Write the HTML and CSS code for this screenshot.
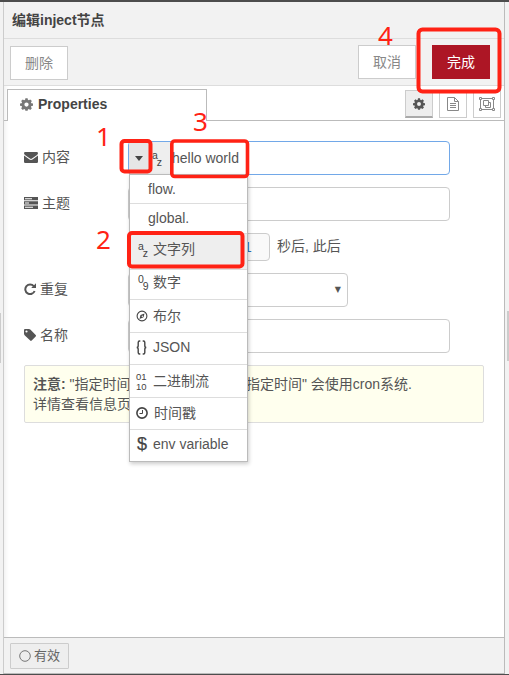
FILE: index.html
```html
<!DOCTYPE html>
<html lang="zh-CN">
<head>
<meta charset="utf-8">
<title>编辑inject节点</title>
<link rel="stylesheet" href="styles.css">
</head>
<body>
<svg class="defs" width="0" height="0">
  <symbol id="gear" viewBox="0 0 14 14"><path fill-rule="evenodd" d="M5.800 1h2.400l.3 1.700 1.100.5L11 2.200 12.800 4l-1 1.400.4 1 1.800.3v2.400l-1.800.3-.4 1 1 1.400-1.800 1.800-1.400-1-1.100.4L8.200 14.500H5.800l-.3-1.500-1.100-.4-1.400 1L1.200 11.800l1-1.400-.4-1L0 9.100V6.700l1.800-.3.4-1-1-1.400L3 2.200l1.400 1 1.100-.5zM7 5.500a2.300 2.300 0 1 0 0 4.600 2.300 2.300 0 0 0 0-4.600z" transform="translate(0 -.7)"/></symbol>
</svg>
<div class="tray">
  <header class="tray-header">编辑inject节点</header>
  <div class="toolbar">
    <button class="btn">删除</button>
    <span class="spacer"></span>
    <button class="btn cancel">取消</button>
    <button class="btn primary">完成</button>
  </div>
  <div class="tabs">
    <div class="tab"><svg width="13" height="13" fill="#777"><use href="#gear"/></svg><span>Properties</span></div>
    <div class="tab-icons">
      <span class="icon-btn active"><svg width="12" height="12" fill="#555"><use href="#gear"/></svg></span>
      <span class="icon-btn"><svg width="12" height="14" fill="none" stroke="#888"><path d="M.5.500h7l4 4v9H.500zM7.500.500v4h4M3 6.500h6M3 8.500h6M3 10.500h6"/></svg></span>
      <span class="icon-btn"><svg width="16" height="14" fill="none" stroke="#888"><path d="M2.500 1.500h11M2.500 12.500h11M1.500 2.500v9M14.500 2.500v9M4.500 3.500h5v5h-5zM9.500 5.500h2v5h-5v-2"/><path fill="#fff" d="M.500.500h2v2h-2zM13.500.500h2v2h-2zM.500 11.500h2v2h-2zM13.500 11.500h2v2h-2z"/></svg></span>
    </div>
  </div>
  <main class="form">
    <div class="row">
      <label><svg width="14" height="12" fill="#555"><path d="M1.300 1h11.400Q14 1 14 2.300 14 3.400 12.700 4.300L8 7.600Q7 8.200 6 7.600L1.300 4.300Q0 3.400 0 2.300 0 1 1.300 1zM0 4.500l5.500 4Q7 9.400 8.500 8.500L14 4.500v6.200q0 1.300-1.300 1.300H1.300Q0 12 0 10.700z"/></svg>内容</label>
      <div class="field focus typed">
        <span class="type-arrow"></span><span class="type-az az"><i>a</i><i>z</i></span><span class="value">hello world</span>
        <ul class="menu">
          <li class="h29 plain">flow.</li>
          <li class="h30 plain">global.</li>
          <li class="h36 selected"><span class="mi az"><i>a</i><i>z</i></span>文字列</li>
          <li class="h30 digits"><span class="mi az"><i>0</i><i>9</i></span>数字</li>
          <li class="h33"><span class="mi"><svg width="12" height="12" fill="none" stroke="#444"><circle cx="6" cy="6" r="4.900" stroke-width="1.100"/><path fill="#444" stroke="none" d="M8.500 3.500 7.500 7.300 3.500 9 4.500 4.900z"/><circle cx="6.300" cy="6.200" r=".7" fill="#fff" stroke="none"/></svg></span>布尔</li>
          <li class="h32 json"><span class="mi"><svg width="12" height="15" fill="none" stroke="#444" stroke-width="1.400"><path d="M4.300 1H3.500Q2.200 1 2.200 2.500v3Q2.200 7.500.7 7.500q1.500 0 1.500 2v3Q2.200 14 3.500 14h.8M6.700 1h.8q1.300 0 1.300 1.500v3q0 2 1.500 2-1.500 0-1.500 2v3Q8.800 14 7.500 14h-.8"/></svg></span>JSON</li>
          <li class="h33"><span class="mi bin"><i>01</i><i>10</i></span>二进制流</li>
          <li class="h32 time"><span class="mi"><svg width="12" height="12" fill="none" stroke="#444"><circle cx="6" cy="6" r="5.100" stroke-width="1.600"/><path d="M6.500 3v3.500h-3"/></svg></span>时间戳</li>
          <li class="h31 env"><span class="mi dollar">$</span>env variable</li>
        </ul>
      </div>
    </div>
    <div class="row">
      <label><svg width="14" height="12" fill="#555"><path fill-rule="evenodd" d="M0 0h14v3.300H0zM1 1.300v.9h7v-.9zM0 4.200h14v3.400H0zM1 5.500v.9h4v-.9zM0 8.500h14v3.400H0zM1 9.800v.9h8v-.9z"/></svg>主题</label>
      <div class="field"></div>
    </div>
    <div class="row once">
      <label></label>
      <div class="field seconds">1</div><span class="suffix">秒后, 此后</span>
    </div>
    <div class="row">
      <label class="narrow"><svg width="12" height="12" fill="none" stroke="#555" stroke-width="2"><path d="M9.800 3.200A4.800 4.800 0 1 0 10.600 8"/><path fill="#555" stroke="none" d="M12 .3V5H7.200z"/></svg>重复</label>
      <div class="field select">▼</div>
    </div>
    <div class="row">
      <label class="narrow"><svg width="12" height="12" fill="#555"><path fill-rule="evenodd" d="M0 1Q0 0 1 0h4l1.300.6 5.400 5.400q.6.700 0 1.400l-4 4.200q-.8.700-1.500 0L.6 6.300 0 5zM2.500 1.400a1.100 1.100 0 1 0 0 2.200 1.100 1.100 0 0 0 0-2.200z"/></svg>名称</label>
      <div class="field"></div>
    </div>
    <div class="tips"><p><b>注意:</b> "指定时间</p><p class="tail">指定时间" 会使用cron系统.</p><p class="second">详情查看信息页</p></div>
  </main>
  <footer class="tray-footer"><button class="enable"><svg width="12" height="12" fill="none" stroke="#777"><circle cx="6" cy="6" r="5.300"/></svg>有效</button></footer>
</div>
<div class="grip left"></div><div class="grip right"></div>
<svg class="marks" width="509" height="675" fill="none" stroke="#ff2215" stroke-width="4">
  <rect x="121.500" y="141" width="29" height="30.500" rx="3"/>
  <rect x="171.800" y="141" width="75.700" height="35.500" rx="3" stroke-width="3.600"/>
  <rect x="129" y="233" width="113.500" height="33.500" rx="3"/>
  <rect x="418.500" y="29.500" width="81" height="62" rx="4"/>
</svg>
<span class="num n1">1</span><span class="num n2">2</span><span class="num n3">3</span><span class="num n4">4</span>
</body>
</html>
```
FILE: styles.css
```css
* { box-sizing: border-box; }
body {
  margin: 0;
  width: 509px;
  height: 675px;
  overflow: hidden;
  position: relative;
  background: #f2f2f2;
  border-top: 2px solid #4d4d4d;
  border-bottom: 1px solid #4d4d4d;
  font: 14px/20px "Liberation Sans", "Noto Sans CJK SC", sans-serif;
  color: #555;
}
.defs { position: absolute; }
svg { display: block; flex: none; }
i { font-style: normal; }
button { font: inherit; padding: 0; margin: 0; }
.tray {
  width: 502px;
  height: 672px;
  margin-left: 3px;
  border: 1px solid #bbb;
  border-top: 0;
  border-left-color: #ccc;
  background: #fff;
  box-shadow: inset 4px 0 5px -3px rgba(0,0,0,.08);
  display: flex;
  flex-direction: column;
}
.tray-header {
  height: 37px;
  padding: 8px 8px 0;
  border-bottom: 1px solid #ddd;
  background: #f2f2f2;
  color: #444;
  font-weight: bold;
}
.toolbar {
  height: 47px;
  padding: 6px 14px 0 6px;
  display: flex;
  border-bottom: 1px solid #ddd;
  background: #f2f2f2;
}
.spacer { flex: 1; }
.btn {
  width: 58px;
  height: 34px;
  margin-top: 1px;
  border: 1px solid #ccc;
  background: #fff;
  color: #888;
}
.cancel { margin: 0 16px 0 0; }
.primary { margin: 0; background: #ad1625; border-color: #ad1625; color: #fff; }
.tabs {
  height: 35px;
  padding: 3px 3px 0;
  border-bottom: 1px solid #bbb;
  display: flex;
  justify-content: space-between;
}
.tab {
  width: 200px;
  height: 32px;
  border: 1px solid #bbb;
  border-bottom: 0;
  background: #fff;
  padding: 0 12px 3px;
  display: flex;
  align-items: center;
  gap: 5px;
  color: #444;
  font-weight: bold;
}
.tab-icons { display: flex; gap: 6px; padding-top: 1px; }
.icon-btn {
  width: 28px;
  height: 28px;
  border: 1px solid #ccc;
  display: flex;
  align-items: center;
  justify-content: center;
}
.icon-btn.active { background: #eee; border-bottom: 2px solid #aaa; }
.form { flex: 1; padding: 20px 20px 0; }
.row { display: flex; height: 34px; margin-bottom: 12px; }
.row.once { height: 28px; }
label { width: 104px; display: flex; align-items: center; gap: 4px; padding-bottom: 2px; }
.field {
  width: 322px;
  border: 1px solid #ccc;
  border-radius: 4px;
  background: #fff;
}
.focus { border-color: #72a8e8; }
.typed { position: relative; display: flex; align-items: center; }
.type-arrow {
  width: 21px;
  height: 32px;
  background: #e6e6e6;
  border-radius: 3px 0 0 3px;
  display: flex;
  align-items: center;
  justify-content: center;
}
.type-arrow::after { content: ""; border: 4px solid transparent; border-top: 5px solid #444; border-bottom: 0; margin-right: 2px; }
.type-az { width: 20px; height: 32px; background: #eee; padding: 8px 0 0 2px; }
.az { display: flex; font-size: 10.5px; line-height: 10px; color: #444; }
.az i:last-child { margin: 7px 0 0 -1px; }
.value { padding-left: 2px; }
.menu {
  position: absolute;
  z-index: 2;
  left: 0;
  top: 32px;
  width: 119px;
  margin: 0;
  padding: 0;
  list-style: none;
  border: 1px solid #bbb;
  background: #fff;
  box-shadow: 1px 2px 4px rgba(0,0,0,.2);
}
.menu li { display: flex; align-items: center; padding: 0 0 1px 6px; border-bottom: 1px solid #ddd; }
.menu li:last-child { border: 0; }
.menu .plain { padding-left: 18px; }
.menu .selected { background: #eee; padding-bottom: 5px; }
.menu .digits { padding-bottom: 5px; }
.menu .json, .menu .env { padding-bottom: 3px; }
.menu .time .mi { width: 18px; }
.h29 { height: 29px; }
.h30 { height: 30px; }
.h31 { height: 31px; }
.h32 { height: 32px; }
.h33 { height: 33px; }
.h36 { height: 36px; }
.mi { width: 17px; flex: none; color: #444; }
.mi.az { padding: 0 0 0 2px; }
.bin { padding-top: 2px; }
.bin i { display: block; font-size: 9.5px; line-height: 10px; }
.dollar { font-size: 18px; padding-left: 1px; -webkit-text-stroke: .2px #444; }
.seconds { width: 142px; background: #f9f9f9; padding: 3px 0 0 115px; color: #2b72b8; }
.suffix { padding: 3px 0 0 7px; }
.select { width: 220px; padding: 6px 6px 0 0; text-align: right; font: 8px/20px "DejaVu Sans", sans-serif; }
.tips {
  width: 460px;
  height: 58px;
  padding: 8px;
  border: 1px solid #ddd;
  border-radius: 2px;
  background: #ffffee;
  display: grid;
  grid-template-columns: 213px 1fr;
}
.tips p { margin: 0; line-height: 20px; white-space: nowrap; }
.tray-footer {
  height: 36px;
  border-top: 1px solid #bbb;
  background: #f2f2f2;
  padding: 5px 6px;
}
.enable {
  width: 59px;
  height: 26px;
  border: 1px solid #ccc;
  border-radius: 1px;
  background: #eee;
  color: #666;
  font-size: 13px;
  display: flex;
  align-items: center;
  justify-content: center;
  gap: 3px;
}
.grip { position: absolute; width: 1px; height: 50px; background: #ccc; }
.left { left: 0; top: 311px; }
.right { right: 0; top: 309px; width: 2px; }
.marks { position: absolute; left: 0; top: -2px; z-index: 5; }
.num { position: absolute; z-index: 6; color: #ff2215; font: 26px/30px "Noto Sans", sans-serif; }
.n1 { left: 96px; top: 119px; }
.n2 { left: 96px; top: 222px; }
.n3 { left: 193px; top: 104px; }
.n4 { left: 378px; top: 18px; }
```
